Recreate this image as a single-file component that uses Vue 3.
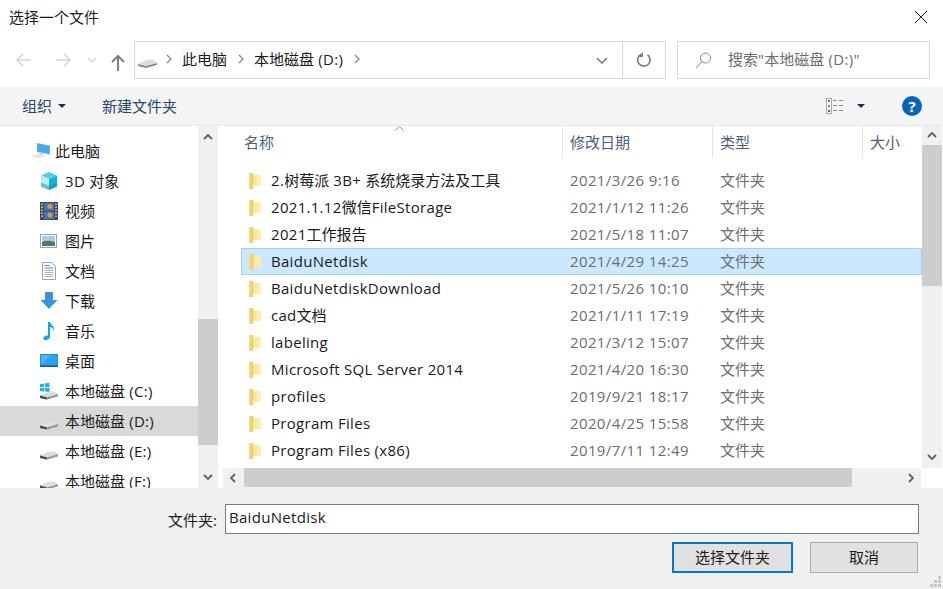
<script setup>
const navItems = [
  { label: '此电脑', icon: 'pc', top: true },
  { label: '3D 对象', icon: 'cube' },
  { label: '视频', icon: 'film' },
  { label: '图片', icon: 'pic' },
  { label: '文档', icon: 'doc' },
  { label: '下载', icon: 'down' },
  { label: '音乐', icon: 'music' },
  { label: '桌面', icon: 'desk' },
  { label: '本地磁盘 (C:)', icon: 'win' },
  { label: '本地磁盘 (D:)', icon: 'drive', active: true },
  { label: '本地磁盘 (E:)', icon: 'drive' },
  { label: '本地磁盘 (F:)', icon: 'drive' },
]
const files = [
  ['2.树莓派 3B+ 系统烧录方法及工具', '2021/3/26 9:16'],
  ['2021.1.12微信FileStorage', '2021/1/12 11:26'],
  ['2021工作报告', '2021/5/18 11:07'],
  ['BaiduNetdisk', '2021/4/29 14:25', true],
  ['BaiduNetdiskDownload', '2021/5/26 10:10'],
  ['cad文档', '2021/1/11 17:19'],
  ['labeling', '2021/3/12 15:07'],
  ['Microsoft SQL Server 2014', '2021/4/20 16:30'],
  ['profiles', '2019/9/21 18:17'],
  ['Program Files', '2020/4/25 15:58'],
  ['Program Files (x86)', '2019/7/11 12:49'],
]
const searchText = '搜索"本地磁盘 (D:)"'
// Latin runs get a little tracking so they fill the same width as the reference's UI font.
const seg = (text) => text.match(/[\x00-\x7f]+|[^\x00-\x7f]+/g).map((t) => ({ t, lat: /^[\x00-\x7f]/.test(t) }))
</script>

<template>
  <div class="dialog">
    <header class="title">
      <span>选择一个文件</span>
      <svg class="close" width="14" height="14" viewBox="0 0 14 14"><path d="M1 1l12 12M13 1L1 13" stroke="#111" stroke-width="1" fill="none"/></svg>
    </header>

    <div class="addr-row">
      <div class="nav-btns">
        <svg width="18" height="14" viewBox="0 0 18 14"><path d="M16 7H2M8 1L2 7l6 6" stroke="#d6d6d6" stroke-width="1.6" fill="none"/></svg>
        <svg width="18" height="14" viewBox="0 0 18 14"><path d="M2 7h14M10 1l6 6-6 6" stroke="#d6d6d6" stroke-width="1.6" fill="none"/></svg>
        <svg width="10" height="6" viewBox="0 0 10 6"><path d="M1 1l4 4 4-4" stroke="#d6d6d6" stroke-width="1.4" fill="none"/></svg>
        <svg width="14" height="17" viewBox="0 0 14 17"><path d="M7 17V2M1 8l6-6 6 6" stroke="#7f7f7f" stroke-width="2" fill="none"/></svg>
      </div>
      <div class="crumbs">
        <svg class="crumb-drive" width="19" height="9" viewBox="0 0 19 9"><path d="M0 5l9-4.500h6L19 4 8 7z" fill="#dedede"/><path d="M0 5v2l8 2 11-3V4L8 7z" fill="#8a8a8a"/><path d="M2 6.500h3" stroke="#38b13c"/></svg>
        <svg class="chev" width="6" height="10" viewBox="0 0 6 10"><path d="M1 1l4 4-4 4" stroke="#8a8a8a" stroke-width="1.300" fill="none"/></svg>
        <span class="crumb">此电脑</span>
        <svg class="chev" width="6" height="10" viewBox="0 0 6 10"><path d="M1 1l4 4-4 4" stroke="#8a8a8a" stroke-width="1.300" fill="none"/></svg>
        <span class="crumb"><span v-for="s in seg('本地磁盘 (D:)')" :key="s.t" :class="{ lat: s.lat }">{{ s.t }}</span></span>
        <svg class="chev" width="6" height="10" viewBox="0 0 6 10"><path d="M1 1l4 4-4 4" stroke="#8a8a8a" stroke-width="1.300" fill="none"/></svg>
        <svg class="drop" width="12" height="7" viewBox="0 0 12 7"><path d="M1 1l5 5 5-5" stroke="#7a7a7a" stroke-width="1.600" fill="none"/></svg>
        <div class="refresh">
          <svg width="16" height="16" viewBox="0 0 16 16"><path d="M11.500 2.700A6.300 6.300 0 1 1 5 2.200" stroke="#7f7f7f" stroke-width="1.700" fill="none"/><path d="M7 0v5H2.500z" fill="#7f7f7f"/></svg>
        </div>
      </div>
      <div class="search">
        <svg width="17" height="17" viewBox="0 0 17 17"><circle cx="10.500" cy="6" r="5" stroke="#8a8a8a" fill="none"/><path d="M7 9.500L1 16" stroke="#b08d6a" stroke-width="1.100"/></svg>
        <span><span v-for="s in seg(searchText)" :key="s.t" :class="{ lat: s.lat }">{{ s.t }}</span></span>
      </div>
    </div>

    <div class="toolbar">
      <span class="tool">组织</span>
      <i class="caret"></i>
      <span class="tool new">新建文件夹</span>
      <svg class="views" width="18" height="16" viewBox="0 0 18 16">
        <rect x=".5" y=".5" width="5" height="15" fill="#fff" stroke="#a8a8a8"/>
        <rect x="2" y="2" width="2" height="2" fill="#4a6fa5"/><rect x="2" y="7" width="2" height="2" fill="#7a8a55"/><rect x="2" y="12" width="2" height="2" fill="#c0392b"/>
        <path d="M7 2.500h4M13 2.500h4M7 7.500h4M13 7.500h4M7 12.500h4M13 12.500h4" stroke="#8a8a8a"/>
      </svg>
      <i class="caret view-caret"></i>
      <div class="help">?</div>
    </div>

    <main class="body">
      <aside class="nav">
        <div v-for="n in navItems" :key="n.label" class="nav-item" :class="{ active: n.active, top: n.top }">
          <svg class="nav-icon" width="20" height="20" viewBox="0 0 20 20">
            <template v-if="n.icon === 'pc'">
              <path d="M6 2l13 2.500v9L6 11z" fill="#9aa7b0"/><path d="M6.500 2.700l12 2.300v7.500l-12-2z" fill="#3fb0ee"/>
              <path d="M8 11l4 .8v2L9 14z" fill="#c8ced3"/>
              <path d="M0 15.500l8-2.500 7 1.500-7.500 3z" fill="#e3e6e8"/>
            </template>
            <template v-else-if="n.icon === 'cube'">
              <path d="M10 1l8 3.500-8 3.500-8-3.500z" fill="#4fd0e6"/><path d="M2 4.500L10 8v11l-8-3.500z" fill="#b4eef4"/><path d="M18 4.500L10 8v11l8-3.500z" fill="#17b1d2"/><path d="M2 11.500l8 3.500 8-3.500v4L10 19l-8-3.500z" fill="#0f8fa8" opacity=".5"/>
            </template>
            <template v-else-if="n.icon === 'film'">
              <rect x="1" y="1" width="18" height="18" fill="#4a4a4a"/>
              <rect x="5" y="2" width="10" height="7.500" fill="#3f74c4"/><rect x="5" y="10.500" width="10" height="7.500" fill="#3f74c4"/>
              <circle cx="11" cy="5.500" r="2.500" fill="#d99a3a"/><circle cx="11" cy="14" r="2.500" fill="#d99a3a"/>
              <path d="M3 2.500v15M17 2.500v15" stroke="#ddd" stroke-width="1.400" stroke-dasharray="1.500 1.500"/>
            </template>
            <template v-else-if="n.icon === 'pic'">
              <rect x="1.500" y="3.500" width="16" height="13" fill="#fff" stroke="#a0a0a0"/>
              <rect x="3" y="5" width="13" height="10" fill="#a9cdea"/>
              <path d="M3 11c4-2 8-1 13 0v4H3z" fill="#4c7a6a"/>
            </template>
            <template v-else-if="n.icon === 'doc'">
              <path d="M3.500 1.500h9l4 4v13h-13z" fill="#fff" stroke="#a0a0a0"/>
              <path d="M5.500 4.500h5M5.500 7h9" stroke="#2b9ae0"/><path d="M5.500 9.500h9M5.500 11.500h9M5.500 13.500h9M5.500 15.500h9" stroke="#b5b5b5"/>
            </template>
            <template v-else-if="n.icon === 'down'">
              <path d="M6 1h8v8h4.500L10 18 1.500 9H6z" fill="#3a92e0"/>
            </template>
            <template v-else-if="n.icon === 'music'">
              <path d="M9 1h2c.5 3 5 4 4 9-.7-2.500-2-3.500-4-4v9.500c0 2-2 3.500-4.500 3.500S4 17.500 5 16c1-1.300 2.800-1.700 4-1.300z" fill="#12a5f0"/>
            </template>
            <template v-else-if="n.icon === 'desk'">
              <rect x="1" y="3" width="18" height="13" fill="#1b8fe0"/><rect x="2" y="4" width="16" height="10" fill="#4bb4f2"/><path d="M2 14L12 4h6v10z" fill="#2ea3ea"/><rect x="1" y="14.500" width="18" height="1.500" fill="#0d5f9e"/>
            </template>
            <template v-else>
              <path d="M1 14.500l9-4h5.500L19 13.500 8 16.500z" fill="#dedede"/><path d="M1 14.500v2.500l7 1.500 11-3v-2.500L8 16.500z" fill="#9a9a9a"/><path d="M1 14.500v2.500l7 1.500v-2z" fill="#4a4a4a"/><path d="M9 17l2-.5" stroke="#38b13c"/>
              <template v-if="n.icon === 'win'">
                <path d="M1 3l4-.5V6H1zM6 2.300L10.500 2v4H6zM1 7h4v3.500l-4-.5zM6 7h4.500v4L6 10.600z" fill="#14b7f5"/>
              </template>
            </template>
          </svg>
          <span><span v-for="s in seg(n.label)" :key="s.t" :class="{ lat: s.lat }">{{ s.t }}</span></span>
        </div>
      </aside>

      <div class="vbar nav-bar">
        <svg class="arr" width="10" height="6" viewBox="0 0 10 6"><path d="M1 5l4-4 4 4" stroke="#606060" stroke-width="1.800" fill="none"/></svg>
        <div class="space s1"></div>
        <div class="thumb t1"></div>
        <div class="space s2"></div>
        <svg class="arr" width="10" height="6" viewBox="0 0 10 6"><path d="M1 1l4 4 4-4" stroke="#606060" stroke-width="1.800" fill="none"/></svg>
      </div>

      <section class="list">
        <div class="list-main">
          <div class="cols">
            <div class="head">
              <svg class="sort" width="9" height="5" viewBox="0 0 9 5"><path d="M.5 4.500l4-4 4 4" stroke="#9a9a9a" fill="none"/></svg>
              <div class="hcell name">名称</div>
              <div class="hcell date">修改日期</div>
              <div class="hcell type">类型</div>
              <div class="hcell size">大小</div>
            </div>
            <div class="rows">
              <div v-for="f in files" :key="f[0]" class="row" :class="{ sel: f[2] }">
                <svg class="folder" width="14" height="17" viewBox="0 0 14 17">
                  <defs><linearGradient id="fg" x1="0" x2="1" y1="0" y2="0"><stop offset="0" stop-color="#f7dc85"/><stop offset=".3" stop-color="#f0cb62"/><stop offset=".4" stop-color="#fbe6a2"/><stop offset="1" stop-color="#fdeeb9"/></linearGradient></defs>
                  <path d="M1 1h4l1 2h7v11H5v3H1z" fill="url(#fg)"/>
                </svg>
                <span class="fname"><span v-for="s in seg(f[0])" :key="s.t" :class="{ lat: s.lat }">{{ s.t }}</span></span>
                <span class="fdate">{{ f[1] }}</span>
                <span class="ftype">文件夹</span>
              </div>
            </div>
          </div>
          <div class="vbar list-bar">
            <svg class="arr" width="10" height="6" viewBox="0 0 10 6"><path d="M1 5l4-4 4 4" stroke="#606060" stroke-width="1.800" fill="none"/></svg>
            <div class="thumb t2"></div>
            <div class="space"></div>
            <svg class="arr" width="10" height="6" viewBox="0 0 10 6"><path d="M1 1l4 4 4-4" stroke="#606060" stroke-width="1.800" fill="none"/></svg>
          </div>
        </div>
        <div class="hbar">
          <div class="htrack">
            <svg class="harr" width="6" height="10" viewBox="0 0 6 10"><path d="M5 1L1 5l4 4" stroke="#606060" stroke-width="1.800" fill="none"/></svg>
            <div class="hthumb"></div>
            <svg class="harr" width="6" height="10" viewBox="0 0 6 10"><path d="M1 1l4 4-4 4" stroke="#606060" stroke-width="1.800" fill="none"/></svg>
          </div>
        </div>
      </section>
    </main>

    <footer class="footer">
      <div class="field">
        <label>文件夹:</label>
        <div class="input lat">BaiduNetdisk</div>
      </div>
      <div class="buttons">
        <button class="btn primary">选择文件夹</button>
        <button class="btn cancel">取消</button>
      </div>
      <svg class="grip" width="11" height="11" viewBox="0 0 11 11"><path d="M8 0h3v3H8zM4 4h3v3H4zM8 4h3v3H8zM0 8h3v3H0zM4 8h3v3H4zM8 8h3v3H8z" fill="#c4c4c4"/></svg>
    </footer>
  </div>
</template>

<style>
html, body { margin: 0; padding: 0; background: #fff; overflow: hidden; }
</style>

<style scoped>
.dialog {
  width: 943px; height: 589px; display: flex; flex-direction: column; overflow: hidden; background: #fff;
  font-family: "Open Sans", "Noto Sans CJK SC", sans-serif; font-size: 15px; line-height: 20px; color: #1a1a1a;
}
.lat { letter-spacing: .3px; }
.title { height: 41px; flex: none; display: flex; align-items: flex-start; justify-content: space-between; padding: 8px 15px 0 9px; box-sizing: border-box; line-height: 18px; }
.close { margin-top: 2px; }
.addr-row { height: 46px; flex: none; display: flex; align-items: flex-start; }
.nav-btns { width: 134px; height: 38px; flex: none; display: flex; align-items: center; padding-left: 15px; box-sizing: border-box; }
.nav-btns svg:nth-child(1) { margin-right: 21px; }
.nav-btns svg:nth-child(2) { margin-right: 15px; }
.nav-btns svg:nth-child(3) { margin-right: 15px; }
.nav-btns svg:nth-child(4) { margin-top: 4px; margin-left: -1px; }
.crumbs { width: 532px; height: 38px; flex: none; border: 1px solid #d9d9d9; box-sizing: border-box; display: flex; align-items: center; padding-left: 3px; }
.crumb-drive { margin-top: 6px; margin-right: 9px; }
.chev { flex: none; margin-top: -3px; }
.crumb { margin: -2px 11px 0 10px; }
.drop { margin-left: auto; margin-right: 14px; }
.refresh { width: 42px; height: 36px; border-left: 1px solid #d9d9d9; display: flex; align-items: center; justify-content: center; }
.search { width: 253px; height: 38px; margin-left: 11px; flex: none; border: 1px solid #d9d9d9; box-sizing: border-box; display: flex; align-items: center; padding-left: 17px; gap: 16px; color: #6d6d6d; }
.search > span { margin-top: -2px; }
.toolbar { height: 38px; flex: none; background: #f3f4f6; display: flex; align-items: center; padding-left: 22px; border-bottom: 1px solid #e8e8e8; color: #26476b; }
.tool { margin-top: 0; }
.caret { width: 0; height: 0; border: 4px solid transparent; border-top: 4px solid #22304a; border-bottom: 0; margin-left: 6px; margin-right: 36px; }
.new { margin-right: auto; }
.views { margin-right: 13px; }
.view-caret { margin: 0 37px 0 0; }
.help { width: 20px; height: 20px; border-radius: 50%; background: #0a64b8; color: #fff; font-weight: 700; font-size: 15px; line-height: 20px; text-align: center; margin-right: 21px; }
.body { height: 362px; flex: none; display: flex; overflow: hidden; }
.nav { width: 198px; flex: none; padding-top: 10px; overflow: hidden; box-sizing: border-box; }
.nav-item { height: 30px; display: flex; align-items: center; padding-left: 39px; box-sizing: border-box; gap: 6px; }
.nav-item > span { margin-top: -1px; }
.nav-item.top { padding-left: 31px; gap: 4px; }
.nav-item.active { background: #d9d9d9; }
.nav-icon { flex: none; }
.vbar { width: 20px; flex: none; background: #f0f0f0; display: flex; flex-direction: column; align-items: center; box-sizing: border-box; }
.arr { flex: none; margin: 8px 0; }
.nav-bar { height: 362px; margin-right: 5px; }
.s1 { height: 171px; }
.s2 { height: 21px; }
.thumb { background: #cdcdcd; width: 100%; flex: none; }
.t1 { height: 126px; }
.t2 { height: 141px; margin-top: -1px; }
.list { flex: 1; min-width: 0; display: flex; flex-direction: column; }
.list-main { height: 342px; flex: none; display: flex; }
.cols { width: 699px; flex: none; position: relative; }
.head { height: 32px; display: flex; color: #4c607a; position: relative; }
.sort { position: absolute; left: 172px; top: 0; }
.hcell { box-sizing: border-box; line-height: 33px; padding-left: 7px; border-right: 1px solid #e5e5e5; }
.hcell.name { width: 340px; padding-left: 21px; }
.hcell.date { width: 150px; }
.hcell.type { width: 150px; }
.hcell.size { width: 59px; border-right: 0; }
.rows { padding: 9px 0 0 18px; }
.row { height: 27px; display: flex; align-items: center; box-sizing: border-box; padding-left: 7px; width: 681px; }
.row > span { margin-top: -1px; }
.row.sel { background: #cce8ff; border: 1px solid #99d1ff; padding-left: 6px; }
.folder { flex: none; margin-right: 9px; }
.fname { width: 299px; flex: none; white-space: nowrap; }
.fdate { width: 150px; flex: none; color: #6d6d6d; letter-spacing: .38px; }
.ftype { color: #6d6d6d; }
.list-bar .space { flex: 1; }
.list-bar .arr { margin: 6px 0 8px; }
.hbar { height: 20px; flex: none; display: flex; }
.htrack { width: 698px; background: #f0f0f0; display: flex; align-items: center; height: 20px; }
.harr { flex: none; margin: 0 7px; }
.hthumb { width: 608px; height: 19px; background: #cdcdcd; margin: 0 auto 1px 1px; }
.footer { flex: 1; background: #f0f0f0; position: relative; padding-top: 16px; box-sizing: border-box; }
.field { display: flex; align-items: center; height: 30px; }
.field label { width: 217px; text-align: right; box-sizing: border-box; padding-top: 1px; }
.input { width: 694px; height: 30px; margin-left: 8px; box-sizing: border-box; border: 1px solid #7a7a7a; background: #fff; padding-left: 3px; line-height: 25px; }
.buttons { display: flex; margin-top: 8px; padding-left: 672px; gap: 17px; }
.btn { height: 31px; font: inherit; color: #1a1a1a; background: #e1e1e1; box-sizing: border-box; padding: 0 0 2px; }
.primary { width: 121px; border: 2px solid #0078d7; }
.cancel { width: 108px; border: 1px solid #adadad; }
.grip { position: absolute; right: 2px; bottom: 2px; }
</style>
